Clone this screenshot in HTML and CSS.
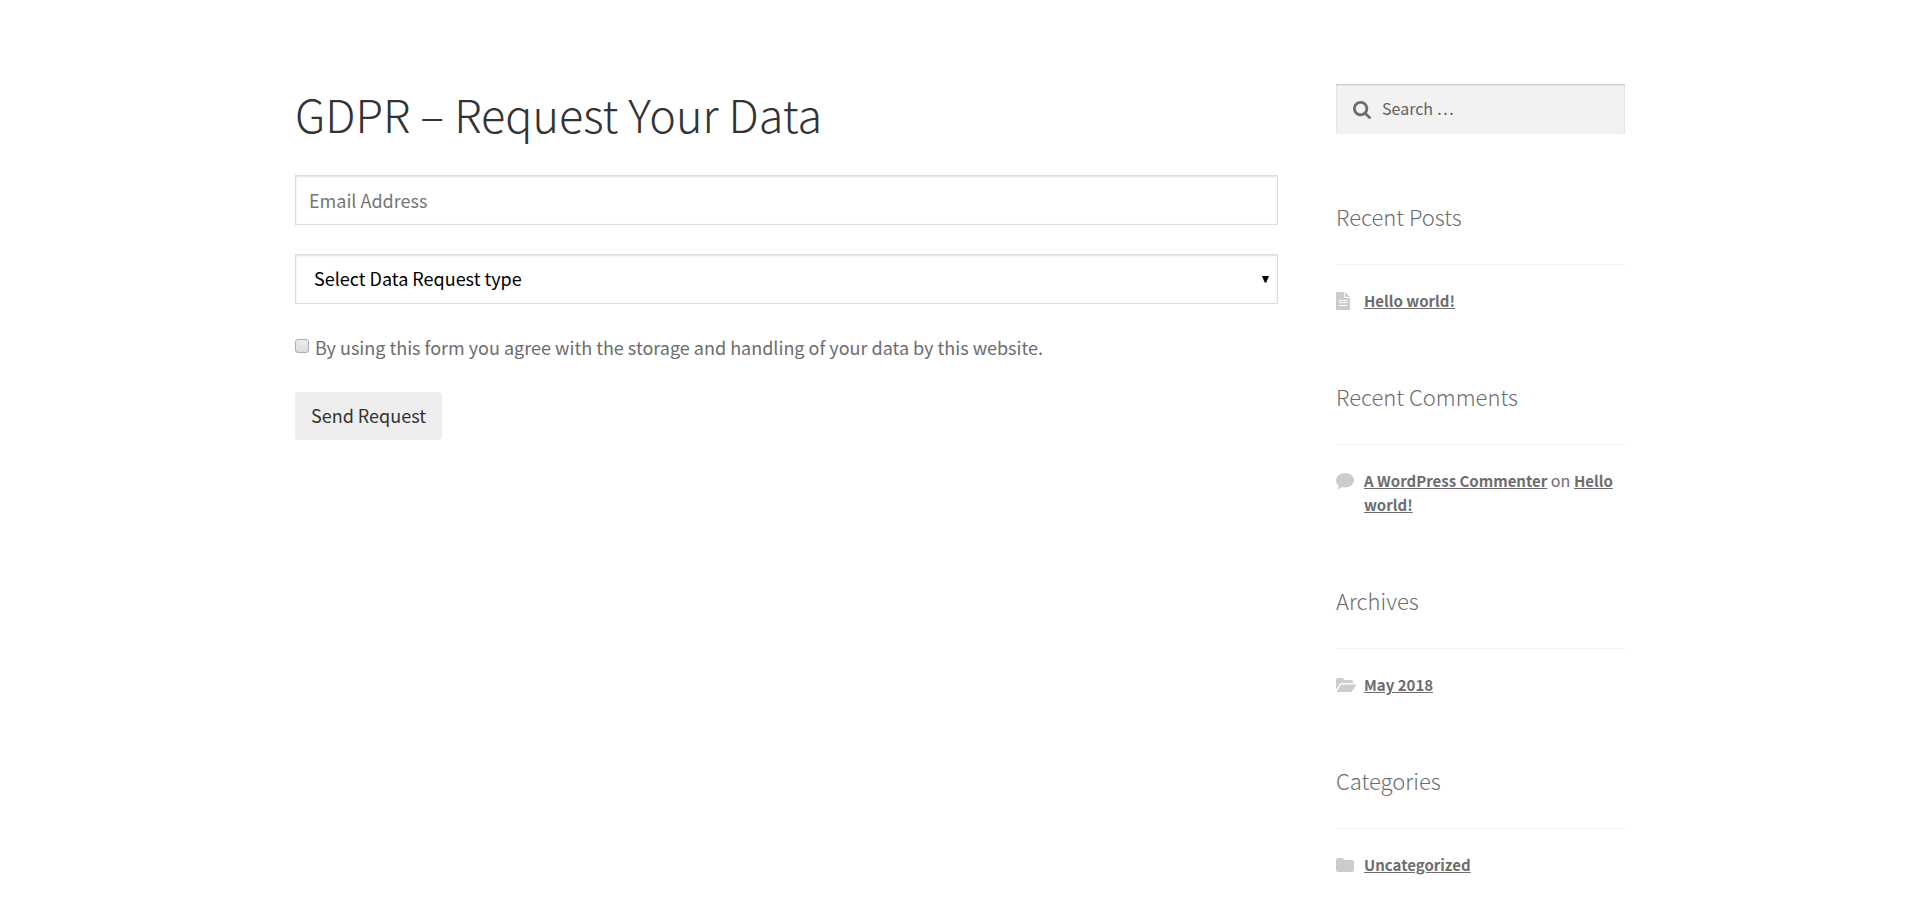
FILE: index.html
```html
<!DOCTYPE html>
<html lang="en">
<head>
<meta charset="utf-8">
<meta name="viewport" content="width=device-width, initial-scale=1">
<title>GDPR – Request Your Data</title>
<link rel="stylesheet" href="styles.css">
</head>
<body>
<div class="page">
  <main class="content">
    <h1 class="title">GDPR – Request Your Data</h1>
    <form class="request">
      <input class="field" type="email" placeholder="Email Address" aria-label="Email Address">
      <div class="select-wrap">
        <select class="field select" aria-label="Data Request type">
          <option>Select Data Request type</option>
        </select>
        <svg class="arrow" viewBox="0 0 7 7" aria-hidden="true"><path d="M0 0h7L4.300 6.500H2.700z"/></svg>
      </div>
      <label class="consent"><input class="tick" type="checkbox"><span>By using this form you agree with the storage and handling of your data by this website.</span></label>
      <button class="send" type="submit">Send Request</button>
    </form>
  </main>
  <aside class="sidebar">
    <form class="search" role="search">
      <svg class="search-icon" viewBox="0 0 1664 1664" aria-hidden="true"><path d="M1152 704q0-185-131.500-316.500T704 256 387.500 387.500 256 704t131.500 316.500T704 1152t316.500-131.500T1152 704zm512 832q0 52-38 90t-90 38q-54 0-90-38l-343-342q-179 124-399 124-143 0-273.500-55.500t-225-150-150-225T0 704t55.500-273.500 150-225 225-150T704 0t273.500 55.500 225 150 150 225T1408 704q0 220-124 399l343 343q37 37 37 90z"/></svg>
      <input class="search-input" type="search" placeholder="Search …" aria-label="Search">
    </form>
    <section class="widget">
      <h2 class="widget-title">Recent Posts</h2>
      <ul class="list">
        <li class="item">
          <svg class="icon" viewBox="0 0 20 18" aria-hidden="true"><path fill-rule="evenodd" d="M1 0h7v5q0 1 1 1h5v11q0 1-1 1H1q-1 0-1-1V1q0-1 1-1zm2 8v1h8V8zm0 2v1h8v-1zm0 3v1h8v-1zM9 0l5 5H9z"/></svg>
          <span><a class="link" href="#">Hello world!</a></span>
        </li>
      </ul>
    </section>
    <section class="widget">
      <h2 class="widget-title">Recent Comments</h2>
      <ul class="list">
        <li class="item">
          <svg class="icon" viewBox="0 0 20 18" aria-hidden="true"><path d="M9 1c5 0 9 3.200 9 7.300s-4 7.200-9 7.200c-1 0-2-.1-2.900-.4C4.800 16.300 3 17 1 17c1-1 1.600-2 1.700-3.300C1 12.400 0 10.500 0 8.300 0 4.200 4 1 9 1z"/></svg>
          <span><a class="link" href="#">A WordPress Commenter</a> on <a class="link" href="#">Hello world!</a></span>
        </li>
      </ul>
    </section>
    <section class="widget">
      <h2 class="widget-title">Archives</h2>
      <ul class="list">
        <li class="item">
          <svg class="icon" viewBox="0 0 20 18" aria-hidden="true"><path d="M0 14V4q0-2 2-2h4q2 0 2 2h7q2 0 2 2v1H6Q4.500 7 3.500 8.300zM.5 16l4-6.600Q5 8.500 6 8.500h13.500q.8 0 .4.800l-3.600 5.500Q15.700 16 14.500 16z"/></svg>
          <span><a class="link" href="#">May 2018</a></span>
        </li>
      </ul>
    </section>
    <section class="widget">
      <h2 class="widget-title">Categories</h2>
      <ul class="list">
        <li class="item">
          <svg class="icon" viewBox="0 0 20 18" aria-hidden="true"><path d="M0 14V4q0-2 2-2h4q2 0 2 2h8q2 0 2 2v8q0 2-2 2H2q-2 0-2-2z"/></svg>
          <span><a class="link" href="#">Uncategorized</a></span>
        </li>
      </ul>
    </section>
  </aside>
</div>
</body>
</html>
```
FILE: styles.css
```css
* { box-sizing: border-box; }

body {
  margin: 0;
  background: #fff;
  color: #6d6d6d;
  font: 18px/28px "Source Sans Pro", "Noto Sans CJK SC", sans-serif;
}

.page {
  display: grid;
  grid-template-columns: minmax(0, 983fr) minmax(0, 289fr);
  gap: 58px;
  max-width: 1330px;
  margin: 0 auto;
  padding-top: 84px;
}

.title {
  margin: 0 0 31px;
  color: #333;
  font-size: 45px;
  font-weight: 300;
  line-height: 60px;
}

.request {
  display: flex;
  flex-direction: column;
  align-items: flex-start;
}

.field {
  display: block;
  width: 100%;
  height: 50px;
  margin: 0 0 29px;
  padding: 0 13px;
  border: 1px solid #dcdcdc;
  border-radius: 0;
  background: #fff;
  box-shadow: inset 0 1px 2px rgba(0, 0, 0, 0.125);
  color: #000;
  font: inherit;
}

.field::placeholder { color: #757575; opacity: 1; }

.select-wrap { position: relative; width: 100%; }

.select { padding: 0 18px 2px; appearance: none; }

.arrow {
  position: absolute;
  top: 22px;
  right: 9px;
  width: 7px;
  height: 7px;
  pointer-events: none;
}

.consent {
  display: flex;
  gap: 6px;
  margin-bottom: 31px;
}

.tick {
  width: 14px;
  height: 14px;
  margin: 6px 0 0;
  border: 1px solid #adadad;
  border-radius: 3px;
  background: linear-gradient(#ededed, #dcdcdc);
  appearance: none;
}

.tick:checked { background: #6d6d6d; }

.send {
  height: 48px;
  padding: 0 16px 2px;
  border: 0;
  border-radius: 4px;
  background: #eee;
  color: #333;
  font: inherit;
}

.search {
  position: relative;
  margin-bottom: 63px;
}

.search-input {
  display: block;
  width: 100%;
  height: 50px;
  padding: 0 16px 2px 46px;
  border: 0;
  border-radius: 0;
  background: #f2f2f2;
  box-shadow: inset 0 1px 2px rgba(0, 0, 0, 0.2);
  color: #43454b;
  font: inherit;
  font-size: 16px;
  appearance: none;
}

.search-input::placeholder { color: #616161; opacity: 1; }

.search-icon {
  position: absolute;
  top: 17px;
  left: 17px;
  width: 18px;
  height: 18px;
  fill: #6d6d6d;
}

.widget { margin-bottom: 65px; }

.widget-title {
  margin: 0 0 23px;
  padding-bottom: 29px;
  border-bottom: 1px solid #f0f0f0;
  font-size: 22px;
  font-weight: 300;
  line-height: 38px;
}

.list {
  margin: 0;
  padding: 0;
  list-style: none;
  font-size: 16px;
  line-height: 24px;
}

.item {
  display: grid;
  grid-template-columns: 20px 1fr;
  gap: 8px;
}

.icon {
  width: 20px;
  height: 18px;
  margin-top: 4px;
  fill: #ccc;
}

.link {
  color: #6d6d6d;
  font-size: 15px;
  font-weight: 600;
  line-height: 20px;
  text-decoration: underline;
}
```
